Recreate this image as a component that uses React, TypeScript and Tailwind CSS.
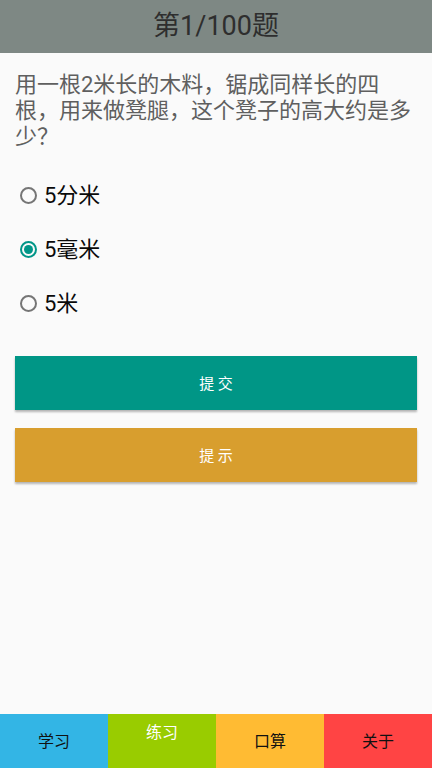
import React from "react";

const font = { fontFamily: '"Roboto", "Noto Sans CJK SC", sans-serif' };

function Radio({ checked }: { checked: boolean }) {
  return checked ? (
    <span className="flex h-[17px] w-[17px] items-center justify-center rounded-full border-[2px] border-[#009688]">
      <span className="h-[9px] w-[9px] rounded-full bg-[#009688]" />
    </span>
  ) : (
    <span className="h-[17px] w-[17px] rounded-full border-[2px] border-[#757575]" />
  );
}

export default function App() {
  const options = [
    { label: "5分米", checked: false },
    { label: "5毫米", checked: true },
    { label: "5米", checked: false },
  ];
  return (
    <div className="flex h-[768px] w-[432px] flex-col bg-[#fafafa]" style={font}>
      <div className="flex h-[53px] items-center justify-center bg-[#7e8884]">
        <span className="text-[27px] text-[#2e2e2e]">第1/100题</span>
      </div>
      <div className="flex flex-1 flex-col">
        <p className="px-[15px] pt-[19px] text-[22px] leading-[26px] text-[#5f5f5f]">
          用一根2米长的木料，锯成同样长的四根，用来做凳腿，这个凳子的高大约是多少？
        </p>
        <div className="mt-[18px] flex flex-col">
          {options.map((o) => (
            <div key={o.label} className="flex h-[54px] items-center pl-[20px]">
              <Radio checked={o.checked} />
              <span className="ml-[7px] text-[22px] text-[#0a0a0a]">{o.label}</span>
            </div>
          ))}
        </div>
        <div className="mt-[26px] flex flex-col gap-[18px] px-[15px]">
          <button className="flex h-[54px] items-center justify-center bg-[#009686] pt-[2px] text-[15px] text-white shadow-[0_1.5px_2px_rgba(0,0,0,0.28)]">
            提 交
          </button>
          <button className="flex h-[54px] items-center justify-center bg-[#d89e2e] pt-[2px] text-[15px] text-white shadow-[0_1.5px_2px_rgba(0,0,0,0.28)]">
            提 示
          </button>
        </div>
      </div>
      <div className="grid h-[54px] grid-cols-4 text-[16px]">
        <div className="flex items-center justify-center bg-[#33b5e5] pt-[2px] text-[#111]">学习</div>
        <div className="flex items-start justify-center bg-[#99cc00] pt-[7px] text-white">练习</div>
        <div className="flex items-center justify-center bg-[#ffbb33] pt-[2px] text-[#111]">口算</div>
        <div className="flex items-center justify-center bg-[#ff4444] pt-[2px] text-[#111]">关于</div>
      </div>
    </div>
  );
}
